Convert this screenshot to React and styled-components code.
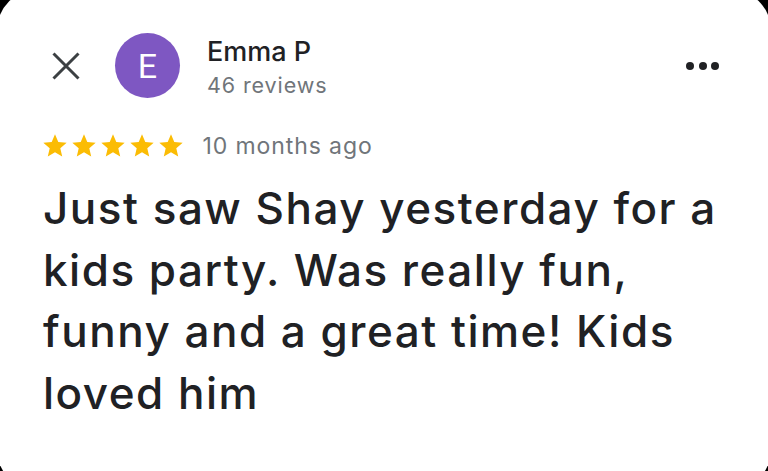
import React from 'react';
import styled, { createGlobalStyle } from 'styled-components';

const GlobalStyle = createGlobalStyle`
  html, body {
    margin: 0;
    padding: 0;
    background: #000;
    overflow: hidden;
  }
  body {
    font-family: Inter, Roboto, "Noto Sans", Arial, sans-serif;
  }
`;

const Card = styled.div`
  background: #fff;
  border-radius: 40px;
  margin: -10px -3px 0 -3px;
  height: 500px;
  padding: 43px 52px 0 46px;
  box-sizing: border-box;
`;

const Header = styled.div`
  display: flex;
  align-items: center;
  height: 65px;
  padding-left: 9px;
`;

const CloseButton = styled.button`
  display: flex;
  align-items: center;
  justify-content: center;
  width: 28px;
  height: 28px;
  padding: 0;
  border: 0;
  background: none;
  color: #3c4043;
  margin-right: 35px;
`;

const Avatar = styled.div`
  width: 65px;
  height: 65px;
  border-radius: 50%;
  background: #7e57c2;
  color: #fff;
  display: flex;
  align-items: center;
  justify-content: center;
  font-family: Roboto, sans-serif;
  font-size: 34px;
  font-weight: 400;
  flex-shrink: 0;
`;

const NameBlock = styled.div`
  display: flex;
  flex-direction: column;
  margin-left: 27px;
  padding-top: 3px;
  flex: 1;
`;

const Name = styled.div`
  font-size: 27px;
  line-height: 32px;
  font-weight: 450;
  color: #202124;
`;

const Meta = styled.div`
  font-size: ${(p) => p.size || 21.5}px;
  line-height: 28px;
  letter-spacing: 0.9px;
  color: #70757a;
  margin-top: ${(p) => p.offset || 0}px;
`;

const MoreButton = styled.div`
  display: flex;
  gap: 4.5px;
  align-items: center;
`;

const Dot = styled.span`
  width: 8px;
  height: 8px;
  border-radius: 50%;
  background: #202124;
`;

const RatingRow = styled.div`
  display: flex;
  align-items: center;
  margin-top: 34px;
  height: 27px;
`;

const Stars = styled.div`
  display: flex;
  gap: 1px;
  margin-left: -2.5px;
  margin-right: 18px;
`;

const Star = styled.svg`
  width: 28px;
  height: 28px;
  fill: #fbbc04;
  display: block;
`;

const Body = styled.p`
  margin: 19px 0 0 0;
  font-size: 44px;
  line-height: 61.7px;
  font-weight: 450;
  letter-spacing: 1.5px;
  color: #202124;
  white-space: nowrap;
`;

const starPath =
  'M12 17.27L18.18 21l-1.64-7.03L22 9.24l-7.19-.61L12 2 9.19 8.63 2 9.24l5.46 4.73L5.82 21z';

export default function App() {
  return (
    <>
      <GlobalStyle />
      <Card>
        <Header>
          <CloseButton aria-label="Close">
            <svg width="28" height="28" viewBox="0 0 28 28">
              <path
                d="M1.5 1.5L26.5 26.5M26.5 1.5L1.5 26.5"
                stroke="currentColor"
                strokeWidth="3"
                fill="none"
              />
            </svg>
          </CloseButton>
          <Avatar>E</Avatar>
          <NameBlock>
            <Name>Emma P</Name>
            <Meta offset={3}>46 reviews</Meta>
          </NameBlock>
          <MoreButton>
            <Dot />
            <Dot />
            <Dot />
          </MoreButton>
        </Header>
        <RatingRow>
          <Stars>
            {[0, 1, 2, 3, 4].map((i) => (
              <Star key={i} viewBox="0 0 24 24">
                <path d={starPath} />
              </Star>
            ))}
          </Stars>
          <Meta size={23}>10 months ago</Meta>
        </RatingRow>
        <Body>
          Just saw Shay yesterday for a<br />
          kids party. Was really fun,<br />
          funny and a great time! Kids<br />
          loved him
        </Body>
      </Card>
    </>
  );
}
